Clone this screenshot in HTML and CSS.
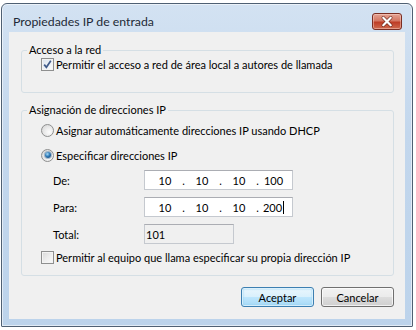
FILE: index.html
```html
<!DOCTYPE html>
<html lang="es">
<head>
    <meta charset="UTF-8">
    <title>Propiedades IP de entrada</title>
    <link rel="stylesheet" href="styles.css">
</head>
<body>
    <div class="ventana">
        <div class="barra-titulo">
            <span class="titulo">Propiedades IP de entrada</span>
            <button class="cerrar" title="Cerrar">
                <svg viewBox="0 0 30 17" width="30" height="17">
                    <path d="M11 4.5 L19 12.5 M19 4.5 L11 12.5" stroke="#6b2418" stroke-width="3.6" stroke-linecap="round"/>
                    <path d="M11 4.5 L19 12.5 M19 4.5 L11 12.5" stroke="#ffffff" stroke-width="2.4" stroke-linecap="round"/>
                </svg>
            </button>
        </div>

        <div class="cliente">
            <fieldset class="grupo grupo-red">
                <legend>Acceso a la red</legend>
                <label class="opcion">
                    <span class="casilla marcada">
                        <svg viewBox="0 0 11 11" width="11" height="11">
                            <path d="M2.2 5.6 L4.4 8.3 L8.8 1.8" fill="none" stroke="#3f5a8a" stroke-width="1.7"/>
                        </svg>
                    </span>
                    Permitir el acceso a red de área local a autores de llamada
                </label>
            </fieldset>

            <fieldset class="grupo grupo-ip">
                <legend>Asignación de direcciones IP</legend>
                <label class="opcion">
                    <span class="radio"></span>
                    Asignar automáticamente direcciones IP usando DHCP
                </label>
                <label class="opcion opcion-2">
                    <span class="radio activa"></span>
                    Especificar direcciones IP
                </label>

                <div class="fila fila-de">
                    <span class="etiqueta">De:</span>
                    <div class="caja-ip">
                        <span class="octeto">10</span><span class="punto">.</span>
                        <span class="octeto">10</span><span class="punto">.</span>
                        <span class="octeto">10</span><span class="punto">.</span>
                        <span class="octeto ultimo">100</span>
                    </div>
                </div>
                <div class="fila">
                    <span class="etiqueta">Para:</span>
                    <div class="caja-ip">
                        <span class="octeto">10</span><span class="punto">.</span>
                        <span class="octeto">10</span><span class="punto">.</span>
                        <span class="octeto">10</span><span class="punto">.</span>
                        <span class="octeto ultimo"><span class="con-cursor">200</span></span>
                    </div>
                </div>
                <div class="fila">
                    <span class="etiqueta">Total:</span>
                    <div class="caja-total">101</div>
                </div>

                <label class="opcion opcion-3">
                    <span class="casilla"></span>
                    Permitir al equipo que llama especificar su propia dirección IP
                </label>
            </fieldset>

            <div class="botones">
                <button class="boton boton-defecto">Aceptar</button>
                <button class="boton">Cancelar</button>
            </div>
        </div>
    </div>
</body>
</html>
```

FILE: styles.css
```css
body {
    margin: 0;
    padding: 3px 0 0 1px;
    width: 416px;
    height: 330px;
    box-sizing: border-box;
    background-color: #ffffff;
    font-family: 'Lato', sans-serif;
    font-size: 11px;
    color: #000000;
    overflow: hidden;
}

/* Marco de la ventana */
.ventana {
    width: 412px;
    height: 324px;
    box-sizing: border-box;
    border: 1px solid #4f6073;
    border-radius: 6px 6px 1px 1px;
    background: linear-gradient(180deg, #d3e2f2 0%, #c3d7ed 40%, #bcd3eb 100%);
    box-shadow: inset 0 0 0 1px rgba(255, 255, 255, 0.55);
    padding: 0 7px 7px 7px;
    display: flex;
    flex-direction: column;
}

.barra-titulo {
    height: 28px;
    box-sizing: border-box;
    padding-top: 6px;
    display: flex;
    align-items: center;
    justify-content: space-between;
}

.titulo {
    margin-left: 4px;
    font-size: 12.3px;
    color: #1e2a36;
}

.cerrar {
    width: 30px;
    height: 17px;
    margin-right: 3px;
    padding: 0;
    border: 1px solid #7a2d22;
    border-radius: 3px;
    background: linear-gradient(180deg, #e4a393 0%, #d47763 45%, #be3d26 55%, #cf6a4f 100%);
    box-shadow: inset 0 0 0 1px rgba(255, 220, 210, 0.45);
    display: flex;
    align-items: center;
    justify-content: center;
}

.cerrar svg {
    display: block;
}

/* Zona cliente */
.cliente {
    flex: 1;
    background-color: #f0f0f0;
    padding: 0 11px 0 12px;
    display: flex;
    flex-direction: column;
}

.grupo {
    margin: 0;
    border: 1px solid #d5dfe5;
    border-radius: 3px;
    padding: 0 0 0 5px;
    min-width: 0;
}

.grupo legend {
    padding: 0 2px;
    line-height: 14px;
}

.grupo-red {
    margin-top: 11px;
    padding-bottom: 21px;
}

.grupo-ip {
    margin-top: 10px;
    padding-bottom: 11px;
}

.opcion {
    display: flex;
    align-items: center;
    height: 14px;
    margin-left: 14px;
    gap: 2px;
    white-space: nowrap;
}

.grupo-ip .opcion:first-of-type {
    margin-top: 6px;
}

.opcion-2 {
    margin-top: 11px;
}

.opcion-3 {
    margin-top: 6px;
}

.casilla {
    width: 13px;
    height: 13px;
    box-sizing: border-box;
    border: 1px solid #8e8f8f;
    background: linear-gradient(135deg, #d8d8d8 0%, #ececec 50%, #fbfbfb 100%);
    box-shadow: inset 0 0 0 1px #f3f3f3;
    display: flex;
    align-items: center;
    justify-content: center;
    flex-shrink: 0;
}

.casilla.marcada {
    background: linear-gradient(135deg, #dbe3ee 0%, #eef2f7 60%, #fbfbfb 100%);
}

.radio {
    width: 13px;
    height: 13px;
    box-sizing: border-box;
    border: 1px solid #8e8f8f;
    border-radius: 50%;
    background: radial-gradient(circle at 65% 65%, #fdfdfd 0%, #e6e6e6 55%, #cfcfcf 100%);
    display: flex;
    align-items: center;
    justify-content: center;
    flex-shrink: 0;
}

.radio.activa::after {
    content: "";
    width: 6px;
    height: 6px;
    border-radius: 50%;
    background: radial-gradient(circle at 40% 35%, #a9dcf7 0%, #2f79b6 45%, #0d3563 100%);
    box-shadow: 0 0 0 1px rgba(30, 80, 130, 0.35);
}

/* Filas de direcciones */
.fila {
    display: flex;
    align-items: center;
    margin-left: 26px;
    margin-top: 7px;
}

.fila-de {
    margin-top: 8px;
}

.etiqueta {
    width: 91px;
}

.caja-ip {
    width: 149px;
    height: 20px;
    box-sizing: border-box;
    border: 1px solid #c5c9cf;
    border-top-color: #abadb3;
    background-color: #ffffff;
    padding-left: 4px;
    display: flex;
    align-items: center;
}

.octeto {
    width: 32px;
    text-align: center;
}

.octeto.ultimo {
    width: 27px;
}

.punto {
    width: 5px;
    text-align: center;
}

.con-cursor {
    border-right: 1px solid #000000;
    padding-right: 1px;
}

.caja-total {
    width: 90px;
    height: 20px;
    box-sizing: border-box;
    border: 1px solid #c5c9cf;
    border-top-color: #abadb3;
    background-color: #f0f0f0;
    padding-left: 1px;
    display: flex;
    align-items: center;
}

/* Botones */
.botones {
    margin-top: 11px;
    display: flex;
    justify-content: flex-end;
    gap: 7px;
}

.boton {
    width: 73px;
    height: 20px;
    padding: 0;
    font-family: 'Lato', sans-serif;
    font-size: 11px;
    color: #000000;
    border: 1px solid #707070;
    border-radius: 3px;
    background: linear-gradient(180deg, #f2f2f2 0%, #ebebeb 50%, #dddddd 51%, #cfcfcf 100%);
    box-shadow: inset 0 0 0 1px rgba(255, 255, 255, 0.7);
}

.boton-defecto {
    border-color: #3c7fb1;
    background: linear-gradient(180deg, #eaf6fd 0%, #d9f0fc 50%, #bee6fd 51%, #a7d9f5 100%);
    box-shadow: inset 0 0 0 1px rgba(255, 255, 255, 0.6), inset 0 0 2px 1px #8fd0f4;
}
```
